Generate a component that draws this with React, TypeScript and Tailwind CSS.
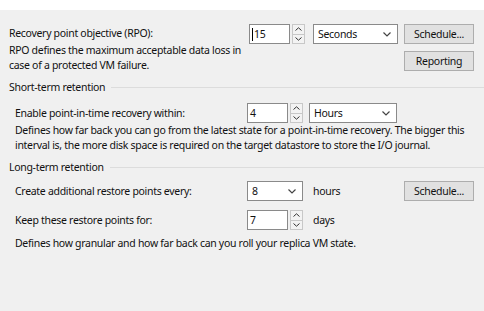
import React from "react";

const Spin = ({ value, caret }: { value: string; caret?: boolean }) => (
  <div className="flex h-[20px] w-[56px] items-stretch">
    <div className="flex w-[41px] items-center border border-[#8a8a8a] bg-white pl-[2px]">
      {caret && <span className="mr-[1px] h-[13px] w-px bg-black" />}
      {value}
    </div>
    <div className="ml-[2px] flex w-[13px] flex-col border border-[#c8c8c8] bg-[#f3f3f3]">
      <div className="flex flex-1 items-center justify-center border-b border-[#c8c8c8]">
        <svg width="7" height="4" viewBox="0 0 7 4">
          <path d="M0.5 3.5 L3.5 0.8 L6.5 3.5" fill="none" stroke="#333" strokeWidth="1" />
        </svg>
      </div>
      <div className="flex flex-1 items-center justify-center">
        <svg width="7" height="4" viewBox="0 0 7 4">
          <path d="M0.5 0.5 L3.5 3.2 L6.5 0.5" fill="none" stroke="#333" strokeWidth="1" />
        </svg>
      </div>
    </div>
  </div>
);

const Combo = ({ value, width }: { value: string; width: string }) => (
  <div className={`flex h-[20px] items-center justify-between border border-[#8a8a8a] bg-white pl-[4px] pr-[6px] ${width}`}>
    <span>{value}</span>
    <svg width="8" height="5" viewBox="0 0 8 5">
      <path d="M0.5 0.5 L4 4 L7.5 0.5" fill="none" stroke="#444" strokeWidth="1.2" />
    </svg>
  </div>
);

const Btn = ({ label }: { label: string }) => (
  <div className="flex h-[20px] w-[70px] items-center justify-center border border-[#adadad] bg-[#e1e1e1]">
    {label}
  </div>
);

const Header = ({ title }: { title: string }) => (
  <div className="flex items-center pl-[9px]">
    <span className="whitespace-nowrap">{title}</span>
    <div className="ml-[6px] h-px flex-1 bg-[#dcdcdc]" />
  </div>
);

export default function App() {
  return (
    <div
      className="h-[311px] w-[484px] overflow-hidden bg-[#f0f0f0] text-[10.5px] leading-[15px] tracking-[-0.3px] text-[#111]"
      style={{ fontFamily: '"Noto Sans", sans-serif' }}
    >
      <div className="h-[10px] bg-white" />

      {/* RPO */}
      <div className="mt-[14px] flex pl-[9px]">
        <div className="w-[240px] whitespace-nowrap">
          <div className="mt-[2px]">Recovery point objective (RPO):</div>
          <div className="mt-[2px]">
            RPO defines the maximum acceptable data loss in
            <br />
            case of a protected VM failure.
          </div>
        </div>
        <div className="flex flex-col">
          <div className="flex items-center">
            <Spin value="15" caret />
            <div className="ml-[8px]">
              <Combo value="Seconds" width="w-[85px]" />
            </div>
            <div className="ml-[6px]">
              <Btn label="Schedule..." />
            </div>
          </div>
          <div className="mt-[7px] flex justify-end">
            <Btn label="Reporting" />
          </div>
        </div>
      </div>

      {/* Short-term */}
      <div className="mt-[7px]">
        <Header title="Short-term retention" />
      </div>
      <div className="mt-[8px] flex items-center pl-[15px]">
        <div className="w-[232px]">Enable point-in-time recovery within:</div>
        <Spin value="4" />
        <div className="ml-[6px]">
          <Combo value="Hours" width="w-[88px]" />
        </div>
      </div>
      <div className="whitespace-nowrap pl-[15px]">
        Defines how far back you can go from the latest state for a point-in-time recovery. The bigger this
        <br />
        interval is, the more disk space is required on the target datastore to store the I/O journal.
      </div>

      {/* Long-term */}
      <div className="mt-[7px]">
        <Header title="Long-term retention" />
      </div>
      <div className="mt-[6px] flex items-center pl-[15px]">
        <div className="w-[232px]">Create additional restore points every:</div>
        <Combo value="8" width="w-[56px]" />
        <div className="ml-[10px] w-[91px]">hours</div>
        <Btn label="Schedule..." />
      </div>
      <div className="mt-[9px] flex items-center pl-[15px]">
        <div className="w-[232px]">Keep these restore points for:</div>
        <Spin value="7" />
        <div className="ml-[10px]">days</div>
      </div>
      <div className="mt-[6px] pl-[15px]">
        Defines how granular and how far back can you roll your replica VM state.
      </div>
    </div>
  );
}
